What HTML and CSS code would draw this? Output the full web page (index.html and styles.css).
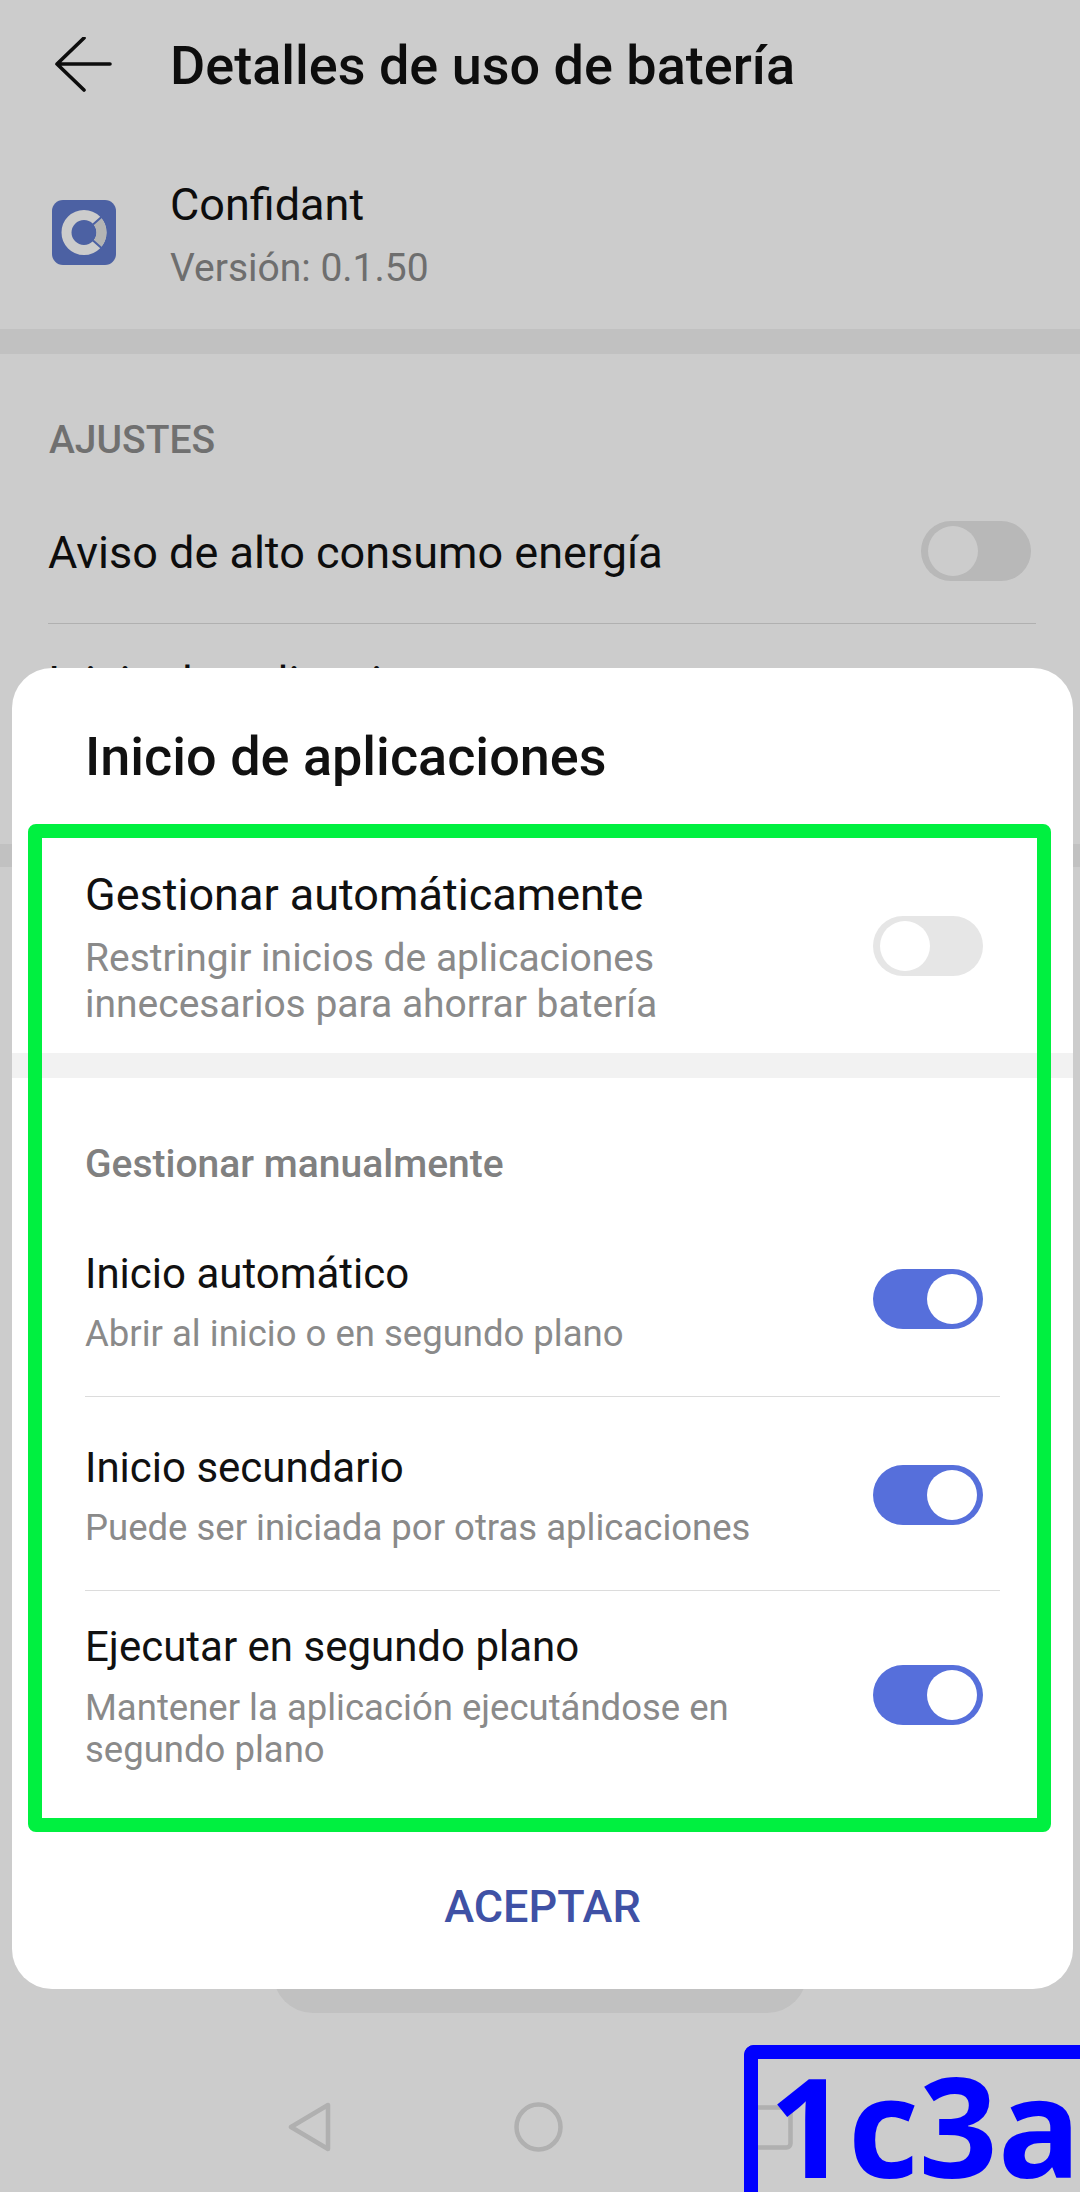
FILE: index.html
```html
<!DOCTYPE html>
<html lang="es">
<head>
    <meta charset="UTF-8">
    <title>Detalles de uso de batería</title>
    <link rel="stylesheet" href="styles.css">
</head>
<body>
<div class="screen">
    <div class="page">
        <div class="topbar">
            <svg class="back" width="60" height="60" viewBox="0 0 60 60" fill="none" stroke="#111" stroke-width="3.6" stroke-linecap="round" stroke-linejoin="round">
                <path d="M3 27H56M30 1L3 27L30 53"/>
            </svg>
            <div class="topbar-title">Detalles de uso de batería</div>
        </div>
        <div class="app">
            <svg class="app-icon" width="64" height="65" viewBox="0 0 64 65" fill="none">
                <rect width="64" height="65" rx="11" fill="#607acc"/>
                <circle cx="32" cy="32.5" r="17.5" stroke="#fff" stroke-width="10"/>
                <path d="M45 20.8A17.5 17.5 0 0 1 45 44.2" stroke="#e2e2e2" stroke-width="10"/>
                <path d="M41 24.5L50 16.5M41 40.5L50 48.5" stroke="#607acc" stroke-width="2"/>
            </svg>
            <div>
                <div class="app-name">Confidant</div>
                <div class="app-version">Versión: 0.1.50</div>
            </div>
        </div>
        <div class="band"></div>
        <div class="section-title">AJUSTES</div>
        <div class="setting">
            <div class="setting-label">Aviso de alto consumo energía</div>
            <div class="toggle"></div>
        </div>
        <div class="setting-next">Inicio de aplicaciones</div>
        <div class="band band-low"></div>
        <div class="page-fill"></div>
        <div class="pill"></div>
        <div class="navbar">
            <svg width="43" height="50" viewBox="0 0 43 50" fill="none" stroke="#dcdcdc" stroke-width="4.5" stroke-linejoin="round">
                <path d="M40 3V47L3 25Z"/>
            </svg>
            <svg width="49" height="50" viewBox="0 0 49 50" fill="none" stroke="#dcdcdc" stroke-width="4.5">
                <ellipse cx="24.5" cy="25" rx="22" ry="22.5"/>
            </svg>
            <svg width="47" height="45" viewBox="0 0 47 45" fill="none" stroke="#dcdcdc" stroke-width="4.5">
                <rect x="2.5" y="2.5" width="42" height="40" rx="4"/>
            </svg>
        </div>
    </div>

    <div class="scrim"></div>

    <div class="dialog">
        <div class="dialog-title">Inicio de aplicaciones</div>
        <div class="row row-auto">
            <div class="row-text">
                <div class="row-title row-title-big">Gestionar automáticamente</div>
                <div class="row-sub row-sub-big">Restringir inicios de aplicaciones<br>innecesarios para ahorrar batería</div>
            </div>
            <div class="toggle toggle-light"></div>
        </div>
        <div class="dialog-band"></div>
        <div class="dialog-label">Gestionar manualmente</div>
        <div class="row row-first">
            <div class="row-text">
                <div class="row-title">Inicio automático</div>
                <div class="row-sub">Abrir al inicio o en segundo plano</div>
            </div>
            <div class="toggle toggle-on"></div>
        </div>
        <div class="row row-mid">
            <div class="row-text">
                <div class="row-title">Inicio secundario</div>
                <div class="row-sub">Puede ser iniciada por otras aplicaciones</div>
            </div>
            <div class="toggle toggle-on"></div>
        </div>
        <div class="row row-last">
            <div class="row-text">
                <div class="row-title">Ejecutar en segundo plano</div>
                <div class="row-sub">Mantener la aplicación ejecutándose en<br>segundo plano</div>
            </div>
            <div class="toggle toggle-on"></div>
        </div>
        <div class="dialog-button">ACEPTAR</div>
    </div>

    <div class="mark-green"></div>
    <div class="mark-blue">1c3a</div>
</div>
</body>
</html>
```

FILE: styles.css
```css
* {
    margin: 0;
    padding: 0;
    box-sizing: border-box;
}
body {
    background: #fff;
    font-family: Roboto, "Noto Sans", sans-serif;
    color: #111;
}
.screen {
    position: relative;
    width: 1080px;
    height: 2192px;
    overflow: hidden;
    background: #fff;
}

/* page behind the dialog */
.page {
    display: flex;
    flex-direction: column;
    height: 2192px;
}
.topbar {
    display: flex;
    height: 135px;
    padding-left: 54px;
}
.back {
    margin-top: 37px;
}
.topbar-title {
    margin-left: 56px;
    font-size: 54px;
    font-weight: 500;
    line-height: 131px;
}
.app {
    display: flex;
    padding: 40px 0 31px 52px;
}
.app-icon {
    margin: 25px 54px 0 0;
}
.app-name {
    font-size: 45px;
    line-height: 60px;
}
.app-version {
    margin-top: 3px;
    font-size: 39px;
    line-height: 60px;
    color: #8a8a8a;
}
.band {
    height: 25px;
    background: #f2f2f2;
}
.band-low {
    height: 23px;
}
.section-title {
    padding: 61px 0 0 49px;
    font-size: 39px;
    font-weight: 500;
    line-height: 50px;
    color: #8d8d8d;
}
.setting {
    display: flex;
    justify-content: space-between;
    margin: 0 44px 0 48px;
    padding: 56px 5px 38px 0;
    border-bottom: 1px solid #dcdcdc;
}
.setting-label {
    font-size: 45px;
    line-height: 64px;
}
.setting-next {
    height: 220px;
    padding: 29px 0 0 48px;
    font-size: 45px;
    line-height: 60px;
}
.page-fill {
    flex: 1;
}
.pill {
    align-self: center;
    width: 534px;
    height: 60px;
    border-radius: 0 0 40px 40px;
    background: #f2f2f2;
}
.navbar {
    display: flex;
    justify-content: center;
    align-items: center;
    gap: 183px;
    height: 179px;
    padding-top: 49px;
}

.scrim {
    position: absolute;
    inset: 0;
    background: rgba(0, 0, 0, 0.2);
}

/* toggles */
.toggle {
    position: relative;
    flex: none;
    width: 110px;
    height: 60px;
    border-radius: 30px;
    background: #e6e6e6;
}
.toggle::after {
    content: "";
    position: absolute;
    top: 5px;
    left: 7px;
    width: 50px;
    height: 50px;
    border-radius: 50%;
    background: #fff;
}
.toggle-on {
    background: #566fdb;
}
.toggle-on::after {
    left: 54px;
}

/* dialog */
.dialog {
    position: absolute;
    left: 12px;
    top: 668px;
    width: 1061px;
    height: 1321px;
    border-radius: 40px;
    background: #fff;
}
.dialog-title {
    padding: 59px 0 0 73px;
    font-size: 54px;
    font-weight: 500;
    line-height: 60px;
}
.row {
    display: flex;
    justify-content: space-between;
    align-items: center;
    margin: 0 73px;
    padding-right: 17px;
}
.row-auto {
    padding-top: 80px;
    padding-bottom: 26px;
}
.row-auto .toggle {
    margin-bottom: 2px;
}
.row-first {
    padding-top: 59px;
    padding-bottom: 39px;
    border-bottom: 1px solid #dcdcdc;
}
.row-first .toggle {
    margin-bottom: 6px;
}
.row-mid {
    padding-top: 43px;
    padding-bottom: 39px;
    border-bottom: 1px solid #dcdcdc;
}
.row-mid .toggle {
    margin-bottom: 2px;
}
.row-last {
    padding-top: 28px;
}
.row-title {
    font-size: 42px;
    line-height: 56px;
}
.row-title-big {
    font-size: 45px;
}
.row-sub {
    margin-top: 9px;
    font-size: 36.5px;
    line-height: 46px;
    color: #8a8a8a;
}
.row-sub-big {
    margin-top: 12px;
    font-size: 39px;
}
.row-last .row-sub {
    margin-top: 12px;
    line-height: 42px;
}
.dialog-band {
    height: 25px;
    background: #f2f2f2;
}
.dialog-label {
    padding: 63px 0 0 73px;
    font-size: 39px;
    font-weight: 500;
    line-height: 46px;
    color: #808080;
}
.dialog-button {
    margin-top: 106px;
    font-size: 45px;
    font-weight: 500;
    line-height: 60px;
    text-align: center;
    color: #3f51a5;
}

/* annotation boxes on top of the screenshot */
.mark-green {
    position: absolute;
    left: 28px;
    top: 824px;
    width: 1023px;
    height: 1008px;
    border: 14px solid #00f040;
    border-radius: 8px;
}
.mark-blue {
    position: absolute;
    left: 744px;
    top: 2045px;
    width: 336px;
    height: 147px;
    padding-left: 11px;
    border: solid #00f;
    border-width: 14px 0 0 14px;
    border-top-left-radius: 10px;
    font-family: "Open Sans", sans-serif;
    font-size: 138px;
    font-weight: 700;
    line-height: 130px;
    color: #00f;
}
```
